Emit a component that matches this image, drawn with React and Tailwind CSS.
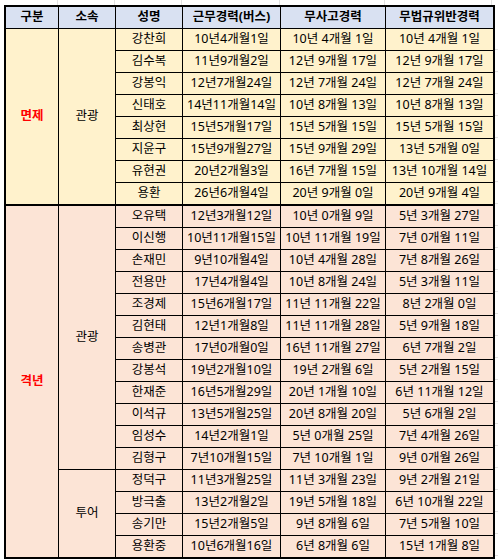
import React from "react";

const sec1 = [
  ["강찬희", "10년4개월1일", "10년 4개월 1일", "10년 4개월 1일"],
  ["김수복", "11년9개월2일", "12년 9개월 17일", "12년 9개월 17일"],
  ["강봉익", "12년7개월24일", "12년 7개월 24일", "12년 7개월 24일"],
  ["신태호", "14년11개월14일", "10년 8개월 13일", "10년 8개월 13일"],
  ["최상현", "15년5개월17일", "15년 5개월 15일", "15년 5개월 15일"],
  ["지윤구", "15년9개월27일", "15년 9개월 29일", "13년 5개월 0일"],
  ["유현권", "20년2개월3일", "16년 7개월 15일", "13년 10개월 14일"],
  ["용환", "26년6개월4일", "20년 9개월 0일", "20년 9개월 4일"],
];

const sec2a = [
  ["오유택", "12년3개월12일", "10년 0개월 9일", "5년 3개월 27일"],
  ["이신행", "10년11개월15일", "10년 11개월 19일", "7년 0개월 11일"],
  ["손재민", "9년10개월4일", "10년 4개월 28일", "7년 8개월 26일"],
  ["전용만", "17년4개월4일", "10년 8개월 24일", "5년 3개월 11일"],
  ["조경제", "15년6개월17일", "11년 11개월 22일", "8년 2개월 0일"],
  ["김현태", "12년1개월8일", "11년 11개월 28일", "5년 9개월 18일"],
  ["송병관", "17년0개월0일", "16년 11개월 27일", "6년 7개월 2일"],
  ["강봉석", "19년2개월10일", "19년 2개월 6일", "5년 2개월 15일"],
  ["한재준", "16년5개월29일", "20년 1개월 10일", "6년 11개월 12일"],
  ["이석규", "13년5개월25일", "20년 8개월 20일", "5년 6개월 2일"],
  ["임성수", "14년2개월1일", "5년 0개월 25일", "7년 4개월 26일"],
  ["김형구", "7년10개월15일", "7년 10개월 1일", "9년 0개월 26일"],
];

const sec2b = [
  ["정덕구", "11년3개월25일", "11년 3개월 23일", "9년 2개월 21일"],
  ["방극출", "13년2개월2일", "19년 5개월 18일", "6년 10개월 22일"],
  ["송기만", "15년2개월5일", "9년 8개월 6일", "7년 5개월 10일"],
  ["용환중", "10년6개월16일", "6년 8개월 6일", "15년 1개월 8일"],
];

const cell = "flex items-center justify-center whitespace-nowrap border-black";

function Row({ r, bg, bottom }) {
  return (
    <>
      {r.map((t, i) => (
        <div
          key={i}
          className={`${cell} ${bg} ${bottom} ${i < 3 ? "border-r" : ""}`}
        >
          {t}
        </div>
      ))}
    </>
  );
}

export default function App() {
  const Y = "bg-[#fff2cc]";
  const P = "bg-[#fce4d6]";
  const topCols = [58, 57, 67, 98, 105, 107];
  return (
    <div
      className="w-[498px] h-[560px] bg-white text-[12.5px] text-black overflow-hidden"
      style={{ fontFamily: '"Noto Sans", "Noto Sans CJK KR", sans-serif' }}
    >
      <div className="flex h-[5px]">
        {topCols.map((w, i) => (
          <div key={i} className="h-full border-r border-[#e1e1e1] shrink-0" style={{ width: w }} />
        ))}
      </div>
      <div className="flex">
        <div className="w-[4px] shrink-0" />
        <div className="w-[491px] shrink-0 border-2 border-black grid grid-cols-[53px_57px_67px_98px_105px_107px] grid-rows-[22px_repeat(7,22px)_23px_repeat(15,22px)_21px]">
          {["구분", "소속", "성명", "근무경력(버스)", "무사고경력", "무법규위반경력"].map((h, i) => (
            <div
              key={h}
              className={`${cell} bg-[#d9e1f2] font-bold border-b ${i < 5 ? "border-r" : ""}`}
            >
              {h}
            </div>
          ))}
          <div className={`${cell} ${Y} row-span-8 border-r border-b-2 text-[#ff0000] font-bold`}>면제</div>
          <div className={`${cell} ${Y} row-span-8 border-r border-b-2`}>관광</div>
          {sec1.map((r, i) => (
            <Row key={i} r={r} bg={Y} bottom={i === sec1.length - 1 ? "border-b-2" : "border-b"} />
          ))}
          <div className={`${cell} ${P} row-span-16 border-r text-[#ff0000] font-bold`}>격년</div>
          <div className={`${cell} ${P} row-span-12 border-r border-b`}>관광</div>
          {sec2a.map((r, i) => (
            <Row key={i} r={r} bg={P} bottom="border-b" />
          ))}
          <div className={`${cell} ${P} row-span-4 border-r`}>투어</div>
          {sec2b.map((r, i) => (
            <Row key={i} r={r} bg={P} bottom={i === sec2b.length - 1 ? "" : "border-b"} />
          ))}
        </div>
        <div className="flex-1 flex flex-col pt-[23px]">
          {Array.from({ length: 24 }).map((_, i) => (
            <div key={i} className="h-[22px] shrink-0 border-b border-[#e1e1e1]" />
          ))}
        </div>
      </div>
    </div>
  );
}
